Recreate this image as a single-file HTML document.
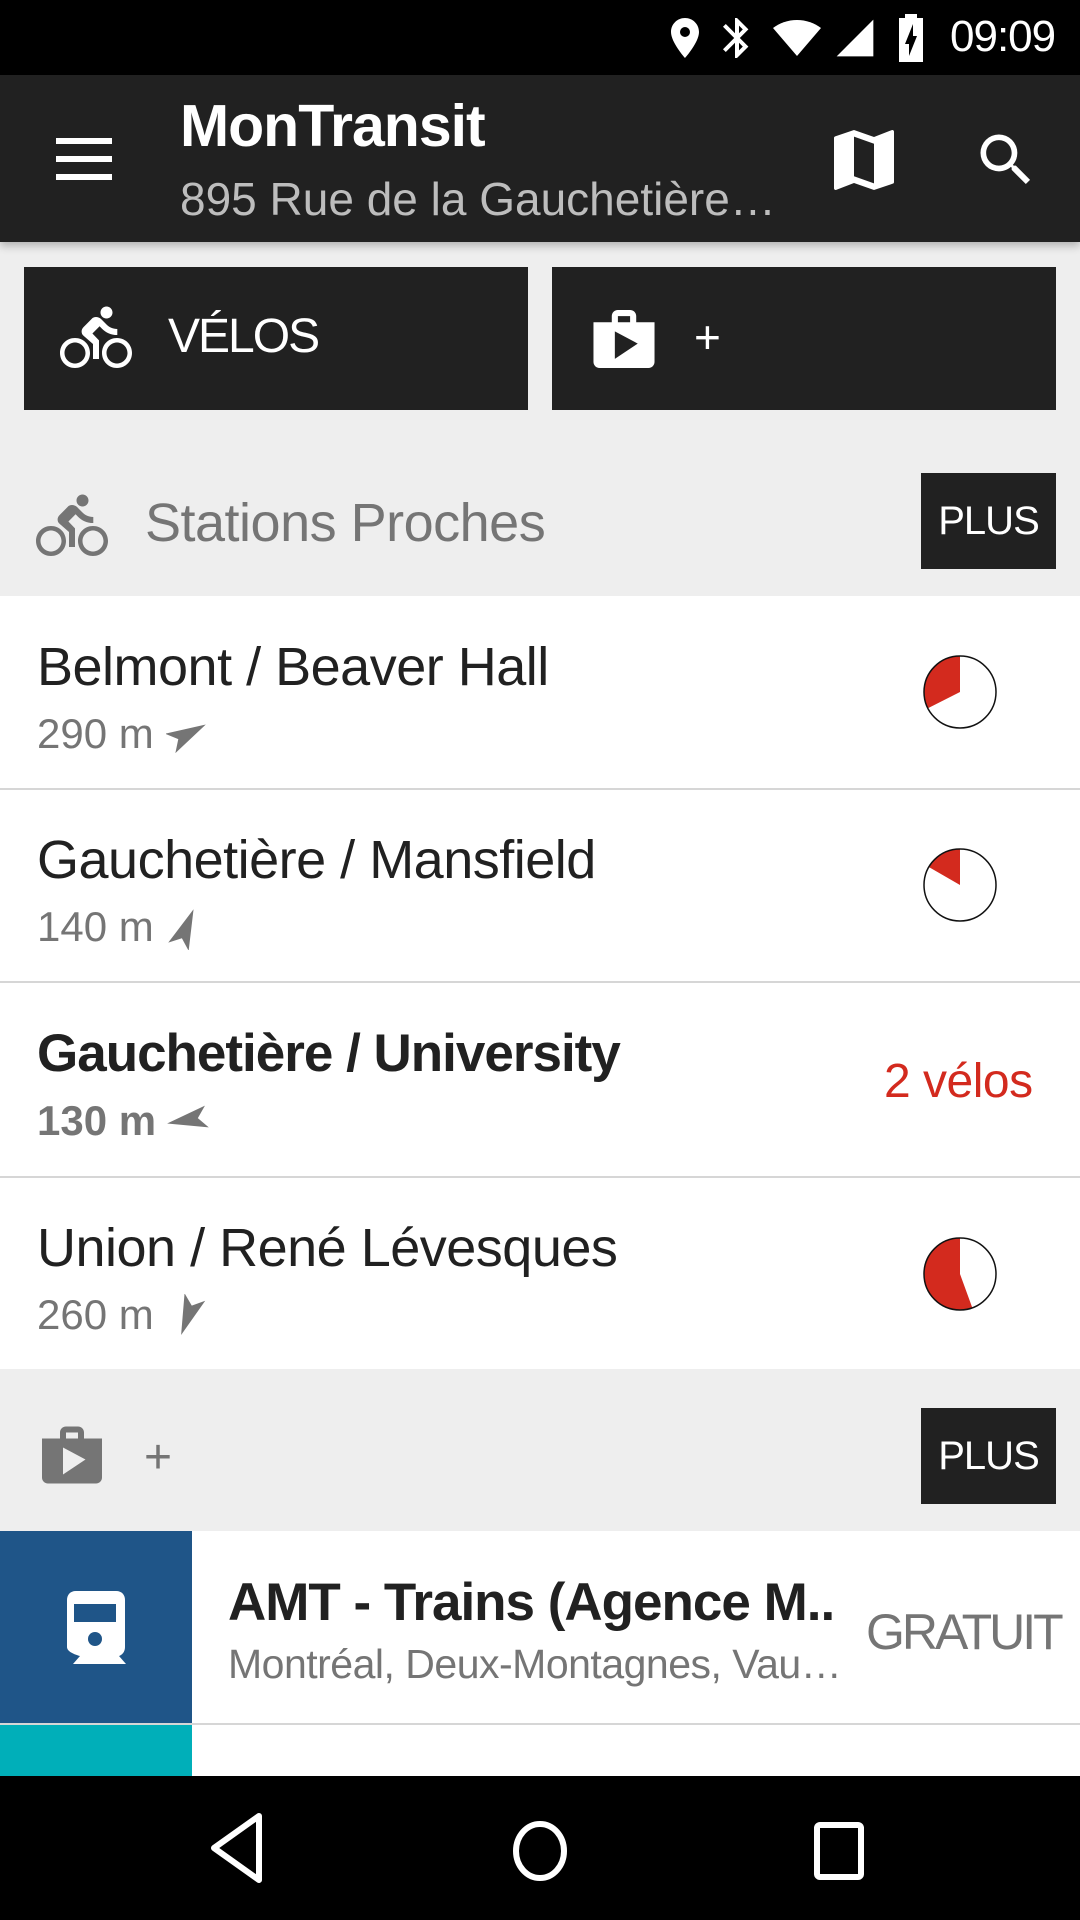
<!DOCTYPE html>
<html><head><meta charset="utf-8"><style>
*{margin:0;padding:0;box-sizing:border-box}
body{width:1080px;height:1920px;overflow:hidden;background:#eeeeee;font-family:"Liberation Sans",sans-serif;position:relative}
.abs{position:absolute}
.t{white-space:nowrap}
</style></head><body>
<!-- status bar -->
<div class="abs" style="left:0;top:0;width:1080px;height:75px;background:#000"></div>
<svg class="abs" style="left:660px;top:14px" width="50" height="48" viewBox="0 0 24 24"><path fill="#fff" d="M12 2C8.1 2 5 5.1 5 9c0 5.2 7 13 7 13s7-7.8 7-13c0-3.9-3.1-7-7-7zm0 9.5a2.5 2.5 0 1 1 0-5 2.5 2.5 0 0 1 0 5z"/></svg>
<svg class="abs" style="left:713px;top:14px" width="48" height="48" viewBox="0 0 24 24"><path fill="#fff" d="M17.7 7.7L12 2h-1v7.6L6.4 5 5 6.4l5.6 5.6L5 17.6 6.4 19l4.6-4.6V22h1l5.7-5.7-4.3-4.3 4.3-4.3zM13 5.8l1.9 1.9L13 9.6V5.8zm1.9 10.5L13 18.2v-3.8l1.9 1.9z"/></svg>
<svg class="abs" style="left:770px;top:14px" width="54" height="48" viewBox="0 0 24 24"><path fill="#fff" d="M12 21L0 7c3.3-2.5 7.5-4 12-4s8.7 1.5 12 4L12 21z"/></svg>
<svg class="abs" style="left:832px;top:16px" width="46" height="44" viewBox="0 0 24 24"><path fill="#fff" d="M2 22h20V2z"/></svg>
<svg class="abs" style="left:896px;top:14px" width="30" height="48" viewBox="0 0 12 24"><path fill="#fff" d="M9 2V0H3v2H0v22h12V2H9zM5 21v-6H3l4-10v6h2l-4 10z"/></svg>
<div class="abs t" style="left:950px;top:12px;color:#fff;font-size:44px;letter-spacing:-1px">09:09</div>
<!-- app bar -->
<div class="abs" style="left:0;top:75px;width:1080px;height:167px;background:#212121;box-shadow:0 4px 8px rgba(0,0,0,.25)"></div>
<div class="abs" style="left:56px;top:138px;width:56px;height:6px;background:#fff"></div>
<div class="abs" style="left:56px;top:156px;width:56px;height:6px;background:#fff"></div>
<div class="abs" style="left:56px;top:174px;width:56px;height:6px;background:#fff"></div>
<div class="abs t" style="left:180px;top:92px;color:#fff;font-size:59px;font-weight:bold;letter-spacing:-1px">MonTransit</div>
<div class="abs t" style="left:180px;top:172px;color:#bdbdbd;font-size:46px">895 Rue de la Gauchetière…</div>
<svg class="abs" style="left:830px;top:130px" width="68" height="60" viewBox="3 3 18 18"><path fill="#fff" d="M20.5 3l-.16.03L15 5.1 9 3 3.36 4.9c-.21.07-.36.25-.36.48V20.5c0 .28.22.5.5.5l.16-.03L9 18.9l6 2.1 5.64-1.9c.21-.07.36-.25.36-.48V3.5c0-.28-.22-.5-.5-.5zM15 19l-6-2.11V5l6 2.11V19z"/></svg>
<svg class="abs" style="left:972px;top:126px" width="68" height="68" viewBox="0 0 24 24"><path fill="#fff" d="M15.5 14h-.79l-.28-.27A6.47 6.47 0 0 0 16 9.5 6.5 6.5 0 1 0 9.5 16c1.61 0 3.09-.59 4.23-1.57l.27.28v.79l5 4.99L20.49 19l-4.99-5zm-6 0C7.01 14 5 11.99 5 9.5S7.01 5 9.5 5 14 7.01 14 9.5 11.99 14 9.5 14z"/></svg>
<!-- buttons -->
<div class="abs" style="left:24px;top:267px;width:504px;height:143px;background:#212121"></div>
<div class="abs" style="left:552px;top:267px;width:504px;height:143px;background:#212121"></div>
<svg class="abs" style="left:60px;top:302px" width="72" height="72" viewBox="0 0 24 24"><path fill="#fff" d="M15.5 5.5c1.1 0 2-.9 2-2s-.9-2-2-2-2 .9-2 2 .9 2 2 2zM5 12c-2.8 0-5 2.2-5 5s2.2 5 5 5 5-2.2 5-5-2.2-5-5-5zm0 8.5c-1.9 0-3.5-1.6-3.5-3.5s1.6-3.5 3.5-3.5 3.5 1.6 3.5 3.5-1.6 3.5-3.5 3.5zm5.8-10l2.4-2.4.8.8c1.3 1.3 3 2.1 5.1 2.1V9c-1.5 0-2.7-.6-3.6-1.5l-1.9-1.9c-.5-.4-1-.6-1.6-.6s-1.1.2-1.4.6L7.8 8.4c-.4.4-.6.9-.6 1.4 0 .6.2 1.1.6 1.4L11 14v5h2v-6.2l-2.2-2.3zM19 12c-2.8 0-5 2.2-5 5s2.2 5 5 5 5-2.2 5-5-2.2-5-5-5zm0 8.5c-1.9 0-3.5-1.6-3.5-3.5s1.6-3.5 3.5-3.5 3.5 1.6 3.5 3.5-1.6 3.5-3.5 3.5z"/></svg>
<div class="abs t" style="left:168px;top:309px;color:#fff;font-size:48px;letter-spacing:-2px">VÉLOS</div>
<svg class="abs" style="left:592px;top:310px" width="64" height="58" viewBox="2 2 20 19"><path fill="#fff" d="M16 6V4c0-1.11-.89-2-2-2h-4c-1.11 0-2 .89-2 2v2H2v13c0 1.11.89 2 2 2h16c1.11 0 2-.89 2-2V6h-6zm-6-2h4v2h-4V4zM9 18V9l7.5 4L9 18z"/></svg>
<div class="abs t" style="left:694px;top:310px;color:#fff;font-size:46px">+</div>
<!-- section header 1 -->
<svg class="abs" style="left:36px;top:490px" width="72" height="72" viewBox="0 0 24 24"><path fill="#757575" d="M15.5 5.5c1.1 0 2-.9 2-2s-.9-2-2-2-2 .9-2 2 .9 2 2 2zM5 12c-2.8 0-5 2.2-5 5s2.2 5 5 5 5-2.2 5-5-2.2-5-5-5zm0 8.5c-1.9 0-3.5-1.6-3.5-3.5s1.6-3.5 3.5-3.5 3.5 1.6 3.5 3.5-1.6 3.5-3.5 3.5zm5.8-10l2.4-2.4.8.8c1.3 1.3 3 2.1 5.1 2.1V9c-1.5 0-2.7-.6-3.6-1.5l-1.9-1.9c-.5-.4-1-.6-1.6-.6s-1.1.2-1.4.6L7.8 8.4c-.4.4-.6.9-.6 1.4 0 .6.2 1.1.6 1.4L11 14v5h2v-6.2l-2.2-2.3zM19 12c-2.8 0-5 2.2-5 5s2.2 5 5 5 5-2.2 5-5-2.2-5-5-5zm0 8.5c-1.9 0-3.5-1.6-3.5-3.5s1.6-3.5 3.5-3.5 3.5 1.6 3.5 3.5-1.6 3.5-3.5 3.5z"/></svg>
<div class="abs t" style="left:145px;top:492px;color:#757575;font-size:54px;letter-spacing:-0.5px">Stations Proches</div>
<div class="abs" style="left:921px;top:473px;width:135px;height:96px;background:#212121;color:#fff;font-size:40px;text-align:center;line-height:96px;letter-spacing:-1px">PLUS</div>
<!-- list -->
<div class="abs" style="left:0;top:596px;width:1080px;height:773px;background:#fff"></div>
<div class="abs" style="left:0;top:788px;width:1080px;height:2px;background:#d6d6d6"></div>
<div class="abs" style="left:0;top:981px;width:1080px;height:2px;background:#d6d6d6"></div>
<div class="abs" style="left:0;top:1176px;width:1080px;height:2px;background:#d6d6d6"></div>

<div class="abs t" style="left:37px;top:636px;color:#212121;font-size:54px;letter-spacing:-0.5px">Belmont / Beaver Hall</div>
<div class="abs t" style="left:37px;top:710px;color:#757575;font-size:42px">290 m</div>
<svg class="abs" style="left:166px;top:712px" width="44" height="44" viewBox="0 0 24 24"><path fill="#757575" transform="rotate(62 12 12)" d="M12 1L6 23l6-5 6 5z"/></svg>
<svg class="abs" style="left:922px;top:654px" width="76" height="76" viewBox="-38 -38 76 76"><circle r="36" fill="#fff"/><path d="M0 0L0 -36A36 36 0 0 0 -32.1 16.3Z" fill="#d32a1e"/><circle r="36" fill="none" stroke="#111" stroke-width="1.5"/></svg>

<div class="abs t" style="left:37px;top:829px;color:#212121;font-size:54px;letter-spacing:-0.5px">Gauchetière / Mansfield</div>
<div class="abs t" style="left:37px;top:903px;color:#757575;font-size:42px">140 m</div>
<svg class="abs" style="left:164px;top:906px" width="44" height="44" viewBox="0 0 24 24"><path fill="#757575" transform="rotate(22 12 12)" d="M12 1L6 23l6-5 6 5z"/></svg>
<svg class="abs" style="left:922px;top:847px" width="76" height="76" viewBox="-38 -38 76 76"><circle r="36" fill="#fff"/><path d="M0 0L0 -36A36 36 0 0 0 -31.2 -18Z" fill="#d32a1e"/><circle r="36" fill="none" stroke="#111" stroke-width="1.5"/></svg>

<div class="abs t" style="left:37px;top:1023px;color:#212121;font-size:53px;font-weight:bold;letter-spacing:-1px">Gauchetière / University</div>
<div class="abs t" style="left:37px;top:1097px;color:#757575;font-size:42px;font-weight:bold">130 m</div>
<svg class="abs" style="left:164px;top:1098px" width="46" height="44" viewBox="0 0 24 24"><path fill="#757575" transform="rotate(-100 12 12)" d="M12 1L6 23l6-5 6 5z"/></svg>
<div class="abs t" style="left:884px;top:1054px;color:#d32a1e;font-size:48px;letter-spacing:-0.5px">2 vélos</div>

<div class="abs t" style="left:37px;top:1217px;color:#212121;font-size:54px;letter-spacing:-0.5px">Union / René Lévesques</div>
<div class="abs t" style="left:37px;top:1291px;color:#757575;font-size:42px">260 m</div>
<svg class="abs" style="left:166px;top:1294px" width="44" height="44" viewBox="0 0 24 24"><path fill="#757575" transform="rotate(200 12 12)" d="M12 1L6 23l6-5 6 5z"/></svg>
<svg class="abs" style="left:922px;top:1236px" width="76" height="76" viewBox="-38 -38 76 76"><circle r="36" fill="#fff"/><path d="M0 0L0 -36A36 36 0 1 0 12.3 33.8Z" fill="#d32a1e"/><circle r="36" fill="none" stroke="#111" stroke-width="1.5"/></svg>

<!-- section header 2 -->
<svg class="abs" style="left:42px;top:1426px" width="60" height="58" viewBox="2 2 20 19"><path fill="#757575" d="M16 6V4c0-1.11-.89-2-2-2h-4c-1.11 0-2 .89-2 2v2H2v13c0 1.11.89 2 2 2h16c1.11 0 2-.89 2-2V6h-6zm-6-2h4v2h-4V4zM9 18V9l7.5 4L9 18z"/></svg>
<div class="abs t" style="left:144px;top:1430px;color:#757575;font-size:48px">+</div>
<div class="abs" style="left:921px;top:1408px;width:135px;height:96px;background:#212121;color:#fff;font-size:40px;text-align:center;line-height:96px;letter-spacing:-1px">PLUS</div>

<!-- agency rows -->
<div class="abs" style="left:0;top:1531px;width:1080px;height:245px;background:#fff"></div>
<div class="abs" style="left:0;top:1531px;width:192px;height:192px;background:#1f5588"></div>
<div class="abs" style="left:0;top:1723px;width:1080px;height:2px;background:#d6d6d6"></div>
<div class="abs" style="left:0;top:1725px;width:192px;height:51px;background:#00afb9"></div>
<svg class="abs" style="left:66px;top:1590px" width="60" height="74" viewBox="0 0 60 74"><path fill="#fff" d="M10 1h40c6 0 9 4 9 9v47c0 5-3 8-6 9l7 8H7l7-8c-4-1-13-4-13-9V10C1 5 4 1 10 1z"/><rect x="8" y="14" width="42" height="18" fill="#1f5588"/><circle cx="29" cy="49" r="7" fill="#1f5588"/></svg>
<div class="abs t" style="left:228px;top:1572px;color:#212121;font-size:53px;font-weight:bold;letter-spacing:-1px">AMT - Trains (Agence M..</div>
<div class="abs t" style="left:228px;top:1641px;color:#757575;font-size:41px;letter-spacing:-0.5px">Montréal, Deux-Montagnes, Vau…</div>
<div class="abs t" style="left:866px;top:1603px;color:#757575;font-size:50px;letter-spacing:-3px">GRATUIT</div>

<!-- nav bar -->
<div class="abs" style="left:0;top:1776px;width:1080px;height:144px;background:#000"></div>
<svg class="abs" style="left:208px;top:1812px" width="60" height="72" viewBox="0 0 60 72"><path d="M51 4L6 36l45 32z" fill="none" stroke="#fff" stroke-width="6" stroke-linejoin="round"/></svg>
<svg class="abs" style="left:510px;top:1818px" width="60" height="66" viewBox="0 0 60 66"><ellipse cx="30" cy="33" rx="24" ry="27" fill="none" stroke="#fff" stroke-width="6"/></svg>
<svg class="abs" style="left:812px;top:1821px" width="56" height="60" viewBox="0 0 56 60"><rect x="5" y="4" width="44" height="52" rx="3" fill="none" stroke="#fff" stroke-width="6"/></svg>
</body></html>
